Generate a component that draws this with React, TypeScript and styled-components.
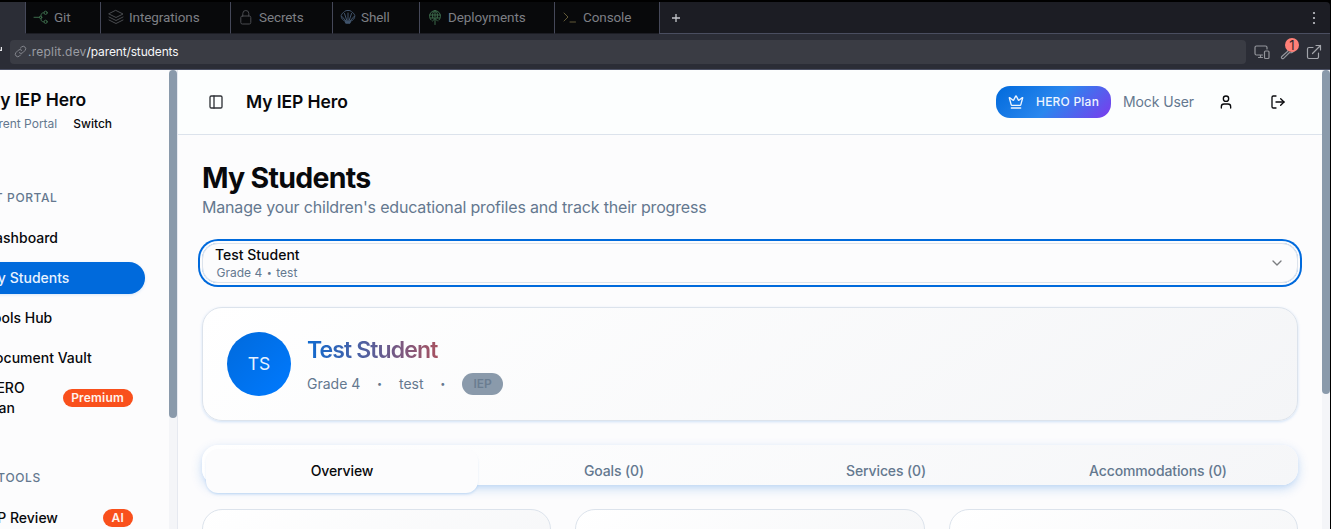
import React from 'react';
import styled, { createGlobalStyle, css } from 'styled-components';
import { ChevronDown, Crown, LogOut, PanelLeft, User } from 'lucide-react';

const Global = createGlobalStyle`
  *, *::before, *::after { box-sizing: border-box; }
  body { margin: 0; background: #000; overflow: hidden; }
`;

const ui = `Inter, "Liberation Sans", sans-serif`;
const chromeFont = `Roboto, "Liberation Sans", sans-serif`;
const muted = '#64788f';
const primary = '#006adc';
const line = '#dce3ec';

const Window = styled.div`
  width: 1331px;
  height: 529px;
  padding: 2px 1px 0 0;
  display: flex;
  flex-direction: column;
  overflow: hidden;
  background: #000;
  font-family: ${ui};
`;

/* Workspace chrome */
const TabStrip = styled.div`
  display: flex;
  height: 32px;
  flex: none;
  background: #1c1d24;
  border-top-right-radius: 4px;
  font-family: ${chromeFont};
`;
const CurrentTab = styled.div`
  width: 25px;
  background: #2b2d36;
`;
const ToolTab = styled.div<{ $width: number }>`
  width: ${(p) => p.$width}px;
  display: flex;
  align-items: center;
  gap: 5px;
  padding: 0 0 1px 7px;
  border-left: 1px solid #454859;
  border-bottom: 1px solid #1c1d24;
  background: #08090b;
  color: #7d7f84;
  font-size: 13.5px;
  letter-spacing: -0.1px;
  white-space: nowrap;
`;
const StripRest = styled.div`
  flex: 1;
  display: flex;
  align-items: center;
  justify-content: space-between;
  padding: 0 10px 0 10px;
  border-left: 1px solid #454859;
  border-bottom: 1px solid #4a4e60;
  color: #c3c5ca;
`;
const AddressRow = styled.div`
  height: 36px;
  flex: none;
  display: flex;
  align-items: center;
  background: #2b2d36;
  border-bottom: 1px solid #4b5064;
`;
const RefreshSlot = styled.div`
  width: 10px;
  height: 24px;
  svg { display: block; }
`;
const AddressField = styled.div`
  width: 1236px;
  height: 24px;
  border-radius: 4px;
  background: #3a3c44;
  display: flex;
  align-items: center;
  padding-left: 4px;
  gap: 1px;
  color: #9a9ca3;
  font-size: 12px;
  letter-spacing: 0.22px;
`;
const UrlPath = styled.span`
  color: #f5f6f7;
  letter-spacing: -0.14px;
`;
const AddressActions = styled.div`
  display: flex;
  align-items: center;
  gap: 10px;
  padding-left: 8px;
`;
const Alert = styled.span`
  position: relative;
  display: flex;
`;
const AlertCount = styled.span`
  position: absolute;
  left: 5px;
  top: -6px;
  width: 14px;
  height: 14px;
  border-radius: 50%;
  background: #ff8078;
  color: #30252b;
  font: 13px/14px ${ui};
  text-align: center;
`;

/* Application */
const Body = styled.div`
  flex: 1;
  min-height: 0;
  display: flex;
  background: #fcfcfd;
  color: #08090c;
`;
const Sidebar = styled.aside`
  width: 169px;
  flex: none;
  overflow: hidden;
`;
const SidebarContent = styled.div`
  width: 248px;
  margin-left: -79px;
`;
const ScrollTrack = styled.div`
  width: 8px;
  flex: none;
  background: #f4f5f8;
`;
const ScrollThumb = styled.div<{ $height: number }>`
  height: ${(p) => p.$height}px;
  border-radius: 4px;
  background: #8a9aab;
`;
const Brand = styled.div`
  height: 104px;
  padding: 16px 0 0 63px;
`;
const BrandName = styled.div`
  font-size: 17.5px;
  font-weight: 600;
  line-height: 28px;
  letter-spacing: -0.06px;
  white-space: nowrap;
`;
const PortalLine = styled.div`
  display: flex;
  gap: 16px;
  font-size: 12px;
  line-height: 20px;
  color: ${muted};
  white-space: nowrap;
`;
const SwitchLink = styled.span`
  color: #08090c;
  font-weight: 500;
`;
const GroupLabel = styled.div<{ $indent: number }>`
  height: 48px;
  padding: 8px 0 0 ${(p) => p.$indent}px;
  font-size: 12px;
  font-weight: 500;
  line-height: 32px;
  letter-spacing: 0.6px;
  color: ${muted};
  white-space: nowrap;
`;
const NavList = styled.nav`
  display: flex;
  flex-direction: column;
  gap: 8px;
  margin-bottom: 36px;
`;
const NavItem = styled.div<{ $active?: boolean; $tall?: boolean }>`
  width: 208px;
  margin-left: 16px;
  height: ${(p) => (p.$tall ? 40 : 32)}px;
  ${(p) => p.$tall && css`margin-top: -4px;`}
  display: flex;
  align-items: center;
  justify-content: space-between;
  padding: 0 12px 0 48px;
  border-radius: 16px;
  font-size: 14px;
  line-height: 20px;
  font-weight: 500;
  ${(p) =>
    p.$active &&
    css`
      color: #e8f2ff;
      background: ${primary};
      box-shadow: 0 1px 3px rgba(0, 106, 220, 0.15);
    `}
`;
const NavText = styled.span<{ $narrow?: boolean }>`
  white-space: ${(p) => (p.$narrow ? 'normal' : 'nowrap')};
  width: ${(p) => (p.$narrow ? '50px' : 'auto')};
  padding-left: ${(p) => (p.$narrow ? 1 : 0)}px;
`;
const Tag = styled.span`
  height: 18px;
  padding: 0 9px 0 8.5px;
  border-radius: 9px;
  background: #f9501c;
  color: #fff3ee;
  font-size: 12px;
  line-height: 18px;
  font-weight: 600;
  letter-spacing: 0.2px;
`;
const Main = styled.main`
  flex: 1;
  min-width: 0;
  overflow: hidden;
  border-left: 1px solid #e6e9f0;
`;
const Header = styled.header`
  height: 65px;
  display: flex;
  align-items: center;
  padding: 0 36px 0 30px;
  background: #fcfefe;
  border-bottom: 1px solid ${line};
`;
const HeaderTitle = styled.div`
  margin-left: 22px;
  padding-bottom: 1px;
  flex: 1;
  font-size: 17.5px;
  font-weight: 600;
  letter-spacing: -0.08px;
`;
const PlanButton = styled.div`
  width: 115px;
  height: 32px;
  display: flex;
  align-items: center;
  gap: 12px;
  padding-left: 12px;
  border-radius: 14px;
  background: linear-gradient(135deg, #006adc 0%, #2a87ee 50%, #7c3aed 100%);
  color: #eef5ff;
  font-size: 12px;
  font-weight: 500;
  letter-spacing: 0.22px;
  white-space: nowrap;
`;
const PlanLabel = styled.span`
  padding-bottom: 1px;
`;
const UserName = styled.div`
  margin: 0 24px 0 12px;
  padding-bottom: 2px;
  width: 71px;
  font-size: 14px;
  letter-spacing: -0.1px;
  color: ${muted};
  white-space: nowrap;
`;
const HeaderIcon = styled.span<{ $gap?: number }>`
  display: flex;
  margin-left: ${(p) => p.$gap ?? 0}px;
`;
const Content = styled.div`
  padding: 27px 24px 0;
`;
const PageTitle = styled.h1`
  margin: 0;
  font-size: 28.5px;
  font-weight: 700;
  line-height: 32px;
  letter-spacing: -0.72px;
`;
const PageLead = styled.p`
  margin: 1px 0 0;
  font-size: 16px;
  line-height: 24px;
  letter-spacing: -0.175px;
  color: ${muted};
`;
const StudentSelect = styled.div`
  margin-top: 24px;
  height: 40px;
  display: flex;
  align-items: center;
  justify-content: space-between;
  padding: 0 12px;
  border: 1px solid ${line};
  border-radius: 16px;
  box-shadow: 0 0 0 2px #fcfcfd, 0 0 0 4px ${primary};
  svg { color: #7b7d80; }
`;
const SelectedName = styled.div`
  font-size: 14px;
  line-height: 18px;
  font-weight: 500;
`;
const SelectedMeta = styled.div`
  display: flex;
  gap: 4.5px;
  padding: 1px 0 0 1.5px;
  margin-bottom: -1px;
  font-size: 12px;
  line-height: 16px;
  color: ${muted};
`;
const Bullet = styled.span`
  font-size: 9px;
`;
const ProfileCard = styled.section`
  margin-top: 24px;
  height: 114px;
  display: flex;
  align-items: center;
  gap: 16px;
  padding: 0 24px;
  border: 1px solid ${line};
  border-radius: 20px;
  background: linear-gradient(145deg, #ffffff, #f4f5f7);
  box-shadow: 0 1px 3px rgba(0, 106, 220, 0.18);
`;
const Avatar = styled.div`
  width: 64px;
  height: 64px;
  border-radius: 50%;
  background: linear-gradient(135deg, #006adc, #007aff);
  color: #e8f2ff;
  font-size: 17.5px;
  line-height: 64px;
  text-align: center;
`;
const StudentName = styled.h2`
  width: max-content;
  margin: 1px 0 7px;
  font-size: 23px;
  font-weight: 600;
  line-height: 32px;
  letter-spacing: -0.87px;
  padding-right: 2px;
  background: linear-gradient(90deg, #0f6ad0, #a75260);
  background-clip: text;
  -webkit-background-clip: text;
  color: transparent;
`;
const StudentFacts = styled.div`
  display: flex;
  align-items: center;
  gap: 16.8px;
  font-size: 14px;
  line-height: 22px;
  color: ${muted};
`;
const PlanTag = styled.span`
  width: 41px;
  height: 22px;
  border-radius: 11px;
  background: #8a9aab;
  color: #6a7d91;
  font-size: 12px;
  font-weight: 600;
  text-align: center;
`;
const Tabs = styled.div`
  margin-top: 24px;
  height: 40px;
  padding: 4px;
  display: grid;
  grid-template-columns: repeat(4, 1fr);
  border-radius: 16px;
  background: linear-gradient(145deg, #ffffff, #f5f6f8);
  box-shadow: 0 4px 12px rgba(0, 106, 220, 0.2), 0 2px 4px rgba(0, 106, 220, 0.08);
`;
const Tab = styled.div<{ $active?: boolean }>`
  height: 44px;
  border-radius: 12px;
  font-size: 14px;
  font-weight: 500;
  line-height: 44px;
  letter-spacing: -0.13px;
  text-align: center;
  color: ${muted};
  ${(p) =>
    p.$active &&
    css`
      color: #08090c;
      background: #fcfcfd;
      box-shadow: 0 2px 3px -1px rgba(0, 106, 220, 0.25);
    `}
`;
const CardGrid = styled.div`
  margin-top: 24px;
  display: grid;
  grid-template-columns: repeat(3, 1fr);
  gap: 24px;
`;
const SummaryCard = styled.div`
  height: 120px;
  border: 1px solid ${line};
  border-radius: 20px;
  background: linear-gradient(145deg, #ffffff, #f4f5f7);
`;

const Glyph = ({ color, children, size = 16, weight = 1 }: { color: string; children: React.ReactNode; size?: number; weight?: number }) => (
  <svg width={size} height={size} viewBox="0 0 16 16" fill="none" stroke={color} strokeWidth={weight} strokeLinecap="round" strokeLinejoin="round">
    {children}
  </svg>
);

const GitIcon = () => (
  <Glyph color="#3c6b4b">
    <path d="M1 8.3h5.300M8 7.500c0-3 .5-3.700 3-3.700M8 9.200c0 3 .5 3.600 3 3.600" />
    <circle cx="12.6" cy="3.8" r="1.6" />
    <circle cx="12.6" cy="12.8" r="1.6" />
    <circle cx="7.600" cy="8.300" r="1.200" />
  </Glyph>
);
const LayersIcon = () => (
  <Glyph color="#4a4c50">
    <path d="M8 1.5 15 5 8 8.5 1 5zM1 8l7 3.5L15 8M1 11l7 3.5 7-3.5" />
  </Glyph>
);
const LockIcon = () => (
  <Glyph color="#4a4c50">
    <rect x="2.8" y="7" width="10" height="8" rx="1.5" />
    <path d="M4.8 7V4.5a3 3 0 0 1 6 0V7" />
  </Glyph>
);
const ShellIcon = () => (
  <Glyph color="#42566e">
    <path d="M5.2 12.2C3 11.4 1 9.500 1.200 6.500 2 4.500 3 3.600 4 3.200 5 1.800 6.500 1.300 8 1.500c1.500-.2 3 .3 4 1.700 1 .4 2 1.300 2.800 3.300.2 3-1.800 4.900-4 5.700M8 4V12M4.500 4.500 7 12M11.500 4.500 9 12M2 7.500 6 12M14 7.500 10 12" />
    <path d="M5.500 12.200h5l-.5 2H6z" fill="#42566e" />
  </Glyph>
);
const DeployIcon = () => (
  <Glyph color="#3c6b4b">
    <path d="M4 11a5.500 5.500 0 1 1 8 0M2.800 6h10.400M3.500 9h9M8 1.500V8M5.800 9C5 5.500 5.700 2.500 8 1.500c2.300 1 3 4 2.200 7.500M8 15.500V9.500M5.500 12 8 9.500l2.500 2.500" />
  </Glyph>
);
const ConsoleIcon = () => (
  <Glyph color="#635a38">
    <path d="M2 4l4 4-4 4M8 13h5.500" />
  </Glyph>
);

const tools = [
  { name: 'Git', width: 75, Icon: GitIcon },
  { name: 'Integrations', width: 130, Icon: LayersIcon },
  { name: 'Secrets', width: 102, Icon: LockIcon },
  { name: 'Shell', width: 87, Icon: ShellIcon },
  { name: 'Deployments', width: 135, Icon: DeployIcon },
  { name: 'Console', width: 105, Icon: ConsoleIcon },
];

export default function App() {
  return (
    <Window>
      <Global />
      <TabStrip>
        <CurrentTab />
        {tools.map(({ name, width, Icon }) => (
          <ToolTab key={name} $width={width}>
            <Icon />
            {name}
          </ToolTab>
        ))}
        <StripRest>
          <svg width="12" height="12" viewBox="0 0 12 12" stroke="currentColor" strokeWidth="1.3">
            <path d="M6 2v8M2 6h8" />
          </svg>
          <svg width="12" height="14" viewBox="0 0 12 14" fill="currentColor">
            <circle cx="6" cy="2" r="1.100" />
            <circle cx="6" cy="7" r="1.100" />
            <circle cx="6" cy="12" r="1.100" />
          </svg>
        </StripRest>
      </TabStrip>
      <AddressRow>
        <RefreshSlot>
          <svg width="4" height="14" viewBox="0 0 4 14" fill="none" stroke="#e4e5e8" strokeWidth="1.200">
            <path d="M1.400 7v3.400H-2" />
          </svg>
        </RefreshSlot>
        <AddressField>
          <Glyph color="#85878e" size={13} weight={1.2}>
            <path d="M6.500 9.500a3 3 0 0 0 4.300 0l2.700-2.700a3 3 0 0 0-4.300-4.300L7.800 3.900M9.500 6.500a3 3 0 0 0-4.300 0L2.500 9.200a3 3 0 0 0 4.300 4.300l1.400-1.400" />
          </Glyph>
          <span>
            .replit.dev<UrlPath>/parent/students</UrlPath>
          </span>
        </AddressField>
        <AddressActions>
          <Glyph color="#93959b" weight={1.2}>
            <path d="M8.500 11H2.500A1.500 1.500 0 0 1 1 9.500v-6A1.500 1.500 0 0 1 2.500 2h9A1.500 1.500 0 0 1 13 3.500V5M4.500 13.500h4M6.500 11v2.500" />
            <rect x="10.500" y="7" width="4.500" height="7.500" rx="1" />
          </Glyph>
          <Alert>
            <Glyph color="#93959b" weight={1.2}>
              <path d="M8 7 1.800 12.500a1.200 1.200 0 0 0 1.800 1.800L9.500 8.500c2 .7 4.500-.3 5-3M8 7C7 5 8 2.500 10.500 2" />
            </Glyph>
            <AlertCount>1</AlertCount>
          </Alert>
          <Glyph color="#a3a5ab" weight={1.2}>
            <path d="M7 3.500H3A1.500 1.500 0 0 0 1.500 5v8A1.500 1.500 0 0 0 3 14.500h8a1.500 1.500 0 0 0 1.500-1.500V9M6.500 9.500l8-8M10 1.500h4.500V6" />
          </Glyph>
        </AddressActions>
      </AddressRow>

      <Body>
        <Sidebar>
          <SidebarContent>
            <Brand>
              <BrandName>My IEP Hero</BrandName>
              <PortalLine>
                Parent Portal <SwitchLink>Switch</SwitchLink>
              </PortalLine>
            </Brand>
            <GroupLabel $indent={31.5}>PARENT PORTAL</GroupLabel>
            <NavList>
              <NavItem><NavText>Dashboard</NavText></NavItem>
              <NavItem $active><NavText>My Students</NavText></NavItem>
              <NavItem><NavText>Tools Hub</NavText></NavItem>
              <NavItem><NavText>Document Vault</NavText></NavItem>
              <NavItem $tall><NavText $narrow>HERO Plan</NavText><Tag>Premium</Tag></NavItem>
            </NavList>
            <GroupLabel $indent={37}>HERO TOOLS</GroupLabel>
            <NavList>
              <NavItem><NavText>IEP Review</NavText><Tag>AI</Tag></NavItem>
            </NavList>
          </SidebarContent>
        </Sidebar>
        <ScrollTrack><ScrollThumb $height={348} /></ScrollTrack>
        <Main>
          <Header>
            <PanelLeft size={16} color="#303338" />
            <HeaderTitle>My IEP Hero</HeaderTitle>
            <PlanButton><Crown size={16} /><PlanLabel>HERO Plan</PlanLabel></PlanButton>
            <UserName>Mock User</UserName>
            <HeaderIcon><User size={16} /></HeaderIcon>
            <HeaderIcon $gap={36}><LogOut size={16} /></HeaderIcon>
          </Header>
          <Content>
            <PageTitle>My Students</PageTitle>
            <PageLead>Manage your children's educational profiles and track their progress</PageLead>
            <StudentSelect>
              <div>
                <SelectedName>Test Student</SelectedName>
                <SelectedMeta>
                  <span>Grade 4</span>
                  <Bullet>•</Bullet>
                  <span>test</span>
                </SelectedMeta>
              </div>
              <ChevronDown size={16} />
            </StudentSelect>
            <ProfileCard>
              <Avatar>TS</Avatar>
              <div>
                <StudentName>Test Student</StudentName>
                <StudentFacts>
                  <span>Grade 4</span>
                  <Bullet>•</Bullet>
                  <span>test</span>
                  <Bullet>•</Bullet>
                  <PlanTag>IEP</PlanTag>
                </StudentFacts>
              </div>
            </ProfileCard>
            <Tabs>
              <Tab $active>Overview</Tab>
              <Tab>Goals (0)</Tab>
              <Tab>Services (0)</Tab>
              <Tab>Accommodations (0)</Tab>
            </Tabs>
            <CardGrid>
              <SummaryCard />
              <SummaryCard />
              <SummaryCard />
            </CardGrid>
          </Content>
        </Main>
        <ScrollTrack><ScrollThumb $height={324} /></ScrollTrack>
      </Body>
    </Window>
  );
}
